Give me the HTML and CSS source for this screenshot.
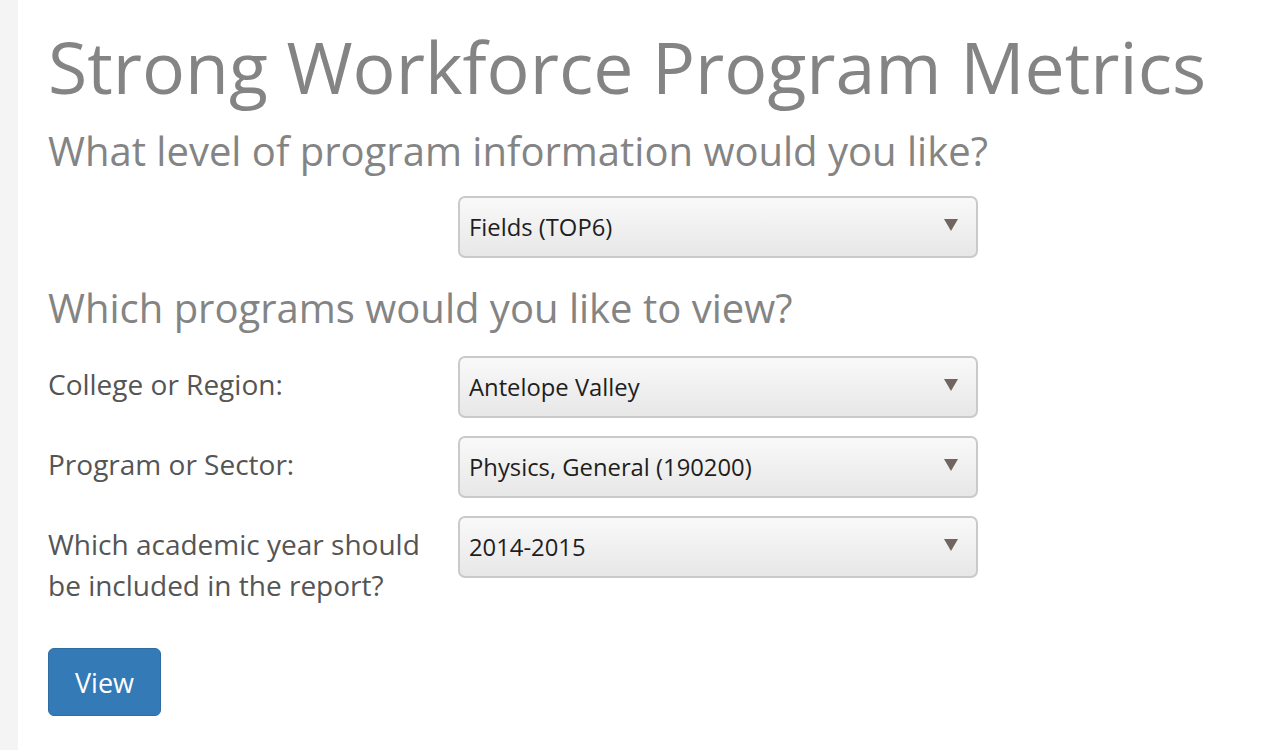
FILE: index.html
```html
<!DOCTYPE html>
<html>
<head>
<meta charset="utf-8">
<link rel="stylesheet" href="styles.css">
</head>
<body>
<div class="page">
  <div class="side"></div>
  <main class="content">
    <h1 class="title">Strong Workforce Program Metrics</h1>
    <h2 class="subtitle first">What level of program information would you like?</h2>
    <div class="row single">
      <div class="label"></div>
      <div class="select"><span class="value">Fields (TOP6)</span><span class="arrow"></span></div>
    </div>
    <h2 class="subtitle second">Which programs would you like to view?</h2>
    <div class="row">
      <div class="label">College or Region:</div>
      <div class="select"><span class="value">Antelope Valley</span><span class="arrow"></span></div>
    </div>
    <div class="row">
      <div class="label">Program or Sector:</div>
      <div class="select"><span class="value">Physics, General (190200)</span><span class="arrow"></span></div>
    </div>
    <div class="row">
      <div class="label">Which academic year should be included in the report?</div>
      <div class="select"><span class="value">2014-2015</span><span class="arrow"></span></div>
    </div>
    <button class="btn">View</button>
  </main>
</div>
</body>
</html>
```
FILE: styles.css
```css
html, body {
  margin: 0;
  padding: 0;
  background: #fff;
  font-family: "Open Sans", "DejaVu Sans", sans-serif;
}
.page {
  display: flex;
  min-height: 750px;
}
.side {
  width: 18px;
  flex: none;
  background: #f4f4f4;
}
.content {
  padding-left: 30px;
  flex: 1;
}
.title {
  margin: 22px 0 0 0;
  font-size: 71.6px;
  font-weight: 400;
  color: #848484;
  line-height: 88px;
}
.subtitle {
  margin: 0;
  font-size: 40px;
  font-weight: 400;
  color: #848484;
  line-height: 60px;
}
.subtitle.first {
  margin-top: 11px;
}
.subtitle.second {
  margin-top: 20px;
}
.row {
  display: grid;
  grid-template-columns: 410px 520px;
  margin-top: 18px;
  min-height: 62px;
}
.row.single {
  margin-top: 15px;
}
.label {
  font-size: 28px;
  color: #555;
  line-height: 41px;
  padding-top: 8px;
  padding-right: 30px;
}
.select {
  position: relative;
  height: 62px;
  box-sizing: border-box;
  border: 2px solid #cacaca;
  border-radius: 7px;
  background: linear-gradient(#f9f9f9, #e7e7e7);
  display: flex;
  align-items: center;
  padding-left: 9px;
  font-size: 23.8px;
  color: #1e1e1e;
}
.arrow {
  position: absolute;
  right: 18px;
  top: 21px;
  width: 0;
  height: 0;
  border-left: 7px solid transparent;
  border-right: 7px solid transparent;
  border-top: 12px solid #706560;
}
.btn {
  margin-top: 42px;
  width: 113px;
  height: 68px;
  background: #337ab7;
  border: 1px solid #2e6da4;
  border-radius: 6px;
  color: #fff;
  font-family: "Open Sans", sans-serif;
  font-size: 27px;
  padding: 0;
}
```
